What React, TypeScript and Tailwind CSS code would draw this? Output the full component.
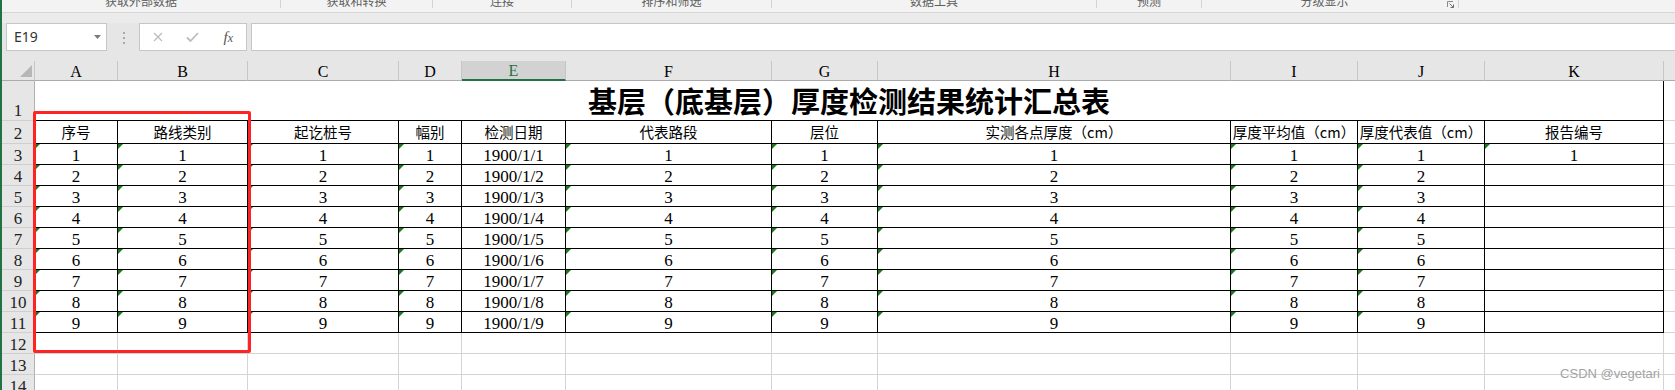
import React from "react";

type Col = { k: string; w: string; head: string; tri: boolean };

const cols: Col[] = [
  { k: "A", w: "w-[83px]", head: "序号", tri: true },
  { k: "B", w: "w-[130px]", head: "路线类别", tri: true },
  { k: "C", w: "w-[151px]", head: "起讫桩号", tri: true },
  { k: "D", w: "w-[63px]", head: "幅别", tri: true },
  { k: "E", w: "w-[104px]", head: "检测日期", tri: false },
  { k: "F", w: "w-[206px]", head: "代表路段", tri: true },
  { k: "G", w: "w-[106px]", head: "层位", tri: true },
  { k: "H", w: "w-[353px]", head: "实测各点厚度（cm）", tri: true },
  { k: "I", w: "w-[127px]", head: "厚度平均值（cm）", tri: true },
  { k: "J", w: "w-[127px]", head: "厚度代表值（cm）", tri: true },
  { k: "K", w: "w-[179px]", head: "报告编号", tri: false },
];

const groups = [
  { w: "w-[278px]", t: "获取外部数据", l: false },
  { w: "w-[151px]", t: "获取和转换", l: false },
  { w: "w-[138px]", t: "连接", l: false },
  { w: "w-[199px]", t: "排序和筛选", l: false },
  { w: "w-[324px]", t: "数据工具", l: false },
  { w: "w-[104px]", t: "预测", l: false },
  { w: "w-[256px]", t: "分级显示", l: true },
];

const serif = "font-['Liberation_Serif',serif]";
const cjk = "font-['Noto_Sans_CJK_SC',sans-serif]";

function Tri() {
  return (
    <span className="absolute left-0 top-0 h-0 w-0 border-t-[5px] border-r-[5px] border-t-[#1b7b1b] border-r-transparent" />
  );
}

function RowHead({ n, h, end }: { n: number; h: string; end?: boolean }) {
  return (
    <div
      className={`${h} w-[33px] shrink-0 bg-[#e6e6e6] border-r border-b border-r-[#b1b1b1] border-b-[#cfcfcf] flex justify-center ${
        end ? "items-end pb-[1px]" : "items-center pt-[2px]"
      } ${serif} text-[17px] leading-none text-[#222]`}
    >
      {n}
    </div>
  );
}

function val(c: Col, n: number) {
  if (c.k === "E") return `1900/1/${n}`;
  if (c.k === "K") return n === 1 ? "1" : "";
  return String(n);
}

export default function App() {
  const dataRows = [1, 2, 3, 4, 5, 6, 7, 8, 9];
  const emptyRows = [12, 13, 14];
  return (
    <div className="relative w-[1675px] h-[390px] overflow-hidden bg-white border-l-2 border-[#217346]">
      {/* ribbon group labels */}
      <div className="flex h-[12px] bg-[#f3f3f3] overflow-hidden">
        {groups.map((g) => (
          <React.Fragment key={g.t}>
            <div className={`${g.w} shrink-0 flex items-start`}>
              <div className={`flex-1 text-center ${cjk} text-[12px] leading-none text-[#5e5e5e] -mt-[5px]`}>{g.t}</div>
              {g.l && (
                <svg width="8" height="7" viewBox="0 0 8 7" className="mt-[1px] mr-[3px]">
                  <path d="M0.5 6V0.5H6" stroke="#8a8a8a" strokeWidth="1" fill="none" />
                  <path d="M2.5 2.5L6.5 6.5M3.5 6.5H6.5V3.5" stroke="#6f6f6f" strokeWidth="1" fill="none" />
                </svg>
              )}
            </div>
            <div className="w-px h-[8px] bg-[#d3d3d3] shrink-0" />
          </React.Fragment>
        ))}
      </div>
      {/* band */}
      <div className="h-[11px] bg-[#ebebeb] border-t border-[#d6d6d6]" />
      {/* formula bar */}
      <div className="flex h-[38px] bg-[#e6e6e6] items-start">
        <div className="ml-[4px] w-[101px] h-[28px] bg-white border border-[#c6c6c6] flex items-center justify-between pl-[7px] pr-[5px] shrink-0">
          <span className="font-['Noto_Sans',sans-serif] text-[14px] leading-none text-[#333]">E19</span>
          <svg width="7" height="4" viewBox="0 0 7 4">
            <path d="M0 0H7L3.5 4Z" fill="#7b7b7b" />
          </svg>
        </div>
        <div className="ml-[16px] mt-[9px] flex flex-col gap-[3px] shrink-0">
          <span className="w-[2px] h-[2px] bg-[#a9a9a9]" />
          <span className="w-[2px] h-[2px] bg-[#a9a9a9]" />
          <span className="w-[2px] h-[2px] bg-[#a9a9a9]" />
        </div>
        <div className="ml-[14px] w-[108px] h-[28px] bg-white border border-[#c6c6c6] flex items-center shrink-0">
          <div className="w-[36px] flex justify-center">
            <svg width="10" height="10" viewBox="0 0 10 10">
              <path d="M1 1L9 9M9 1L1 9" stroke="#bdbdbd" strokeWidth="1.3" />
            </svg>
          </div>
          <div className="w-[36px] flex justify-center">
            <svg width="13" height="10" viewBox="0 0 13 10">
              <path d="M1 5.5L4.5 9L12 1" stroke="#bdbdbd" strokeWidth="1.8" fill="none" />
            </svg>
          </div>
          <div className={`w-[36px] flex justify-center ${serif} italic text-[15px] leading-none text-[#555]`}>
            <span>
              f<span className="text-[12px]">x</span>
            </span>
          </div>
        </div>
        <div className="ml-[4px] flex-1 h-[28px] bg-white border border-r-0 border-[#c6c6c6]" />
      </div>
      {/* column header */}
      <div className="flex h-[20px] bg-[#e6e6e6]">
        <div className="w-[33px] shrink-0 h-[20px] border-r border-b border-r-[#c6c6c6] border-b-[#ababab] flex items-end justify-end pr-[2px] pb-[3px]">
          <svg width="12" height="12" viewBox="0 0 12 12">
            <path d="M12 0V12H0Z" fill="#b6b6b6" />
          </svg>
        </div>
        {cols.map((c) => (
          <div
            key={c.k}
            className={`${c.w} shrink-0 h-[20px] border-r border-r-[#c6c6c6] flex items-center justify-center pt-[2px] ${serif} text-[16px] leading-none ${
              c.k === "E"
                ? "bg-[#d2d2d2] text-[#217346] border-b-2 border-b-[#217346]"
                : "text-black border-b border-b-[#ababab]"
            }`}
          >
            {c.k}
          </div>
        ))}
        <div className="flex-1 h-[20px] border-b border-b-[#ababab]" />
      </div>
      {/* row 1 - title */}
      <div className="flex h-[40px]">
        <RowHead n={1} h="h-[40px]" end />
        <div className={`w-[1629px] shrink-0 h-[40px] border-r border-b border-black flex items-end justify-center pb-[5px] ${cjk} font-bold text-[29px] leading-none text-black`}>
          基层（底基层）厚度检测结果统计汇总表
        </div>
        <div className="flex-1 h-[40px] border-b border-[#d4d4d4]" />
      </div>
      {/* row 2 - headers */}
      <div className="flex h-[23px]">
        <RowHead n={2} h="h-[23px]" />
        {cols.map((c) => (
          <div
            key={c.k}
            className={`${c.w} shrink-0 h-[23px] border-r border-b border-black flex items-center justify-center whitespace-nowrap ${cjk} text-[14.5px] leading-none text-black`}
          >
            {c.head}
          </div>
        ))}
        <div className="flex-1 h-[23px] border-b border-[#d4d4d4]" />
      </div>
      {/* data rows */}
      {dataRows.map((n) => (
        <div key={n} className="flex h-[21px]">
          <RowHead n={n + 2} h="h-[21px]" />
          {cols.map((c) => (
            <div
              key={c.k}
              className={`relative ${c.w} shrink-0 h-[21px] border-r border-b border-black flex items-center justify-center pt-[3px] ${serif} text-[17px] leading-none text-black`}
            >
              {(c.tri || (c.k === "K" && n === 1)) && <Tri />}
              {val(c, n)}
            </div>
          ))}
          <div className="flex-1 h-[21px] border-b border-[#d4d4d4]" />
        </div>
      ))}
      {emptyRows.map((n) => (
        <div key={n} className="flex h-[21px]">
          <RowHead n={n} h="h-[21px]" />
          {cols.map((c) => (
            <div key={c.k} className={`${c.w} shrink-0 h-[21px] border-r border-b border-[#d4d4d4]`} />
          ))}
          <div className="flex-1 h-[21px] border-b border-[#d4d4d4]" />
        </div>
      ))}
      {/* red highlight box */}
      <div className="absolute left-[31px] top-[111px] w-[218px] h-[242px] border-[3px] border-[#ff2323] rounded-[2px]" />
      {/* watermark */}
      <div className="absolute right-[15px] bottom-[10px] font-['Liberation_Sans',sans-serif] text-[13px] leading-none text-[#a3a3a3]">
        CSDN @vegetari
      </div>
    </div>
  );
}
